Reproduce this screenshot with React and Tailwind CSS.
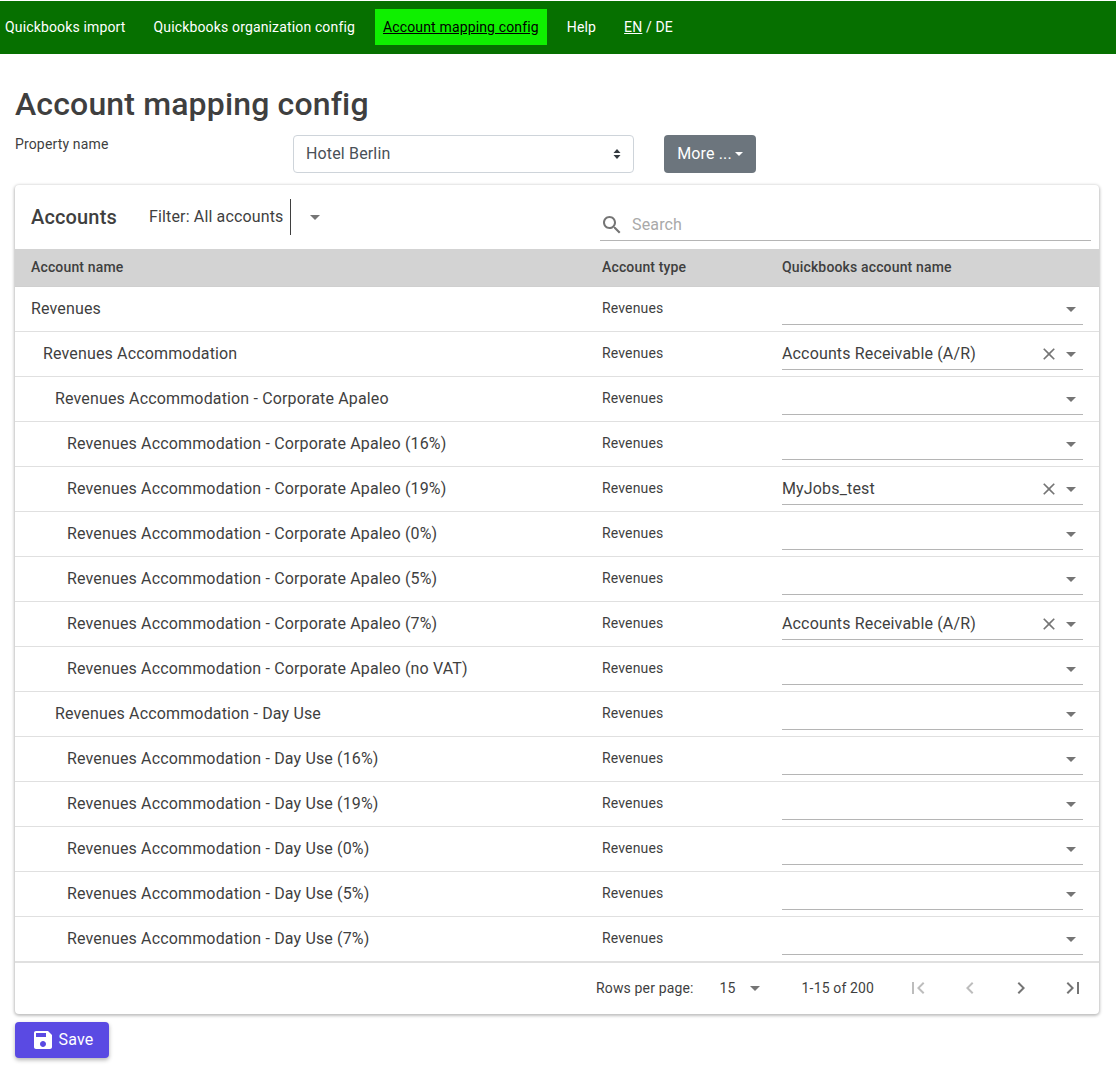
import React from 'react'

const rows = [
  { name: 'Revenues', indent: 0 },
  { name: 'Revenues Accommodation', indent: 1, value: 'Accounts Receivable (A/R)' },
  { name: 'Revenues Accommodation - Corporate Apaleo', indent: 2 },
  { name: 'Revenues Accommodation - Corporate Apaleo (16%)', indent: 3 },
  { name: 'Revenues Accommodation - Corporate Apaleo (19%)', indent: 3, value: 'MyJobs_test' },
  { name: 'Revenues Accommodation - Corporate Apaleo (0%)', indent: 3 },
  { name: 'Revenues Accommodation - Corporate Apaleo (5%)', indent: 3 },
  { name: 'Revenues Accommodation - Corporate Apaleo (7%)', indent: 3, value: 'Accounts Receivable (A/R)' },
  { name: 'Revenues Accommodation - Corporate Apaleo (no VAT)', indent: 3 },
  { name: 'Revenues Accommodation - Day Use', indent: 2 },
  { name: 'Revenues Accommodation - Day Use (16%)', indent: 3 },
  { name: 'Revenues Accommodation - Day Use (19%)', indent: 3 },
  { name: 'Revenues Accommodation - Day Use (0%)', indent: 3 },
  { name: 'Revenues Accommodation - Day Use (5%)', indent: 3 },
  { name: 'Revenues Accommodation - Day Use (7%)', indent: 3 },
]

const indents = ['pl-4', 'pl-7', 'pl-10', 'pl-[52px]']

function Icon({ d, className }) {
  return (
    <svg viewBox="0 0 24 24" fill="currentColor" className={className}>
      <path d={d} />
    </svg>
  )
}

const ICONS = {
  drop: 'M7 10l5 5 5-5z',
  clear: 'M19 6.41L17.59 5 12 10.59 6.41 5 5 6.41 10.59 12 5 17.59 6.41 19 12 13.41 17.59 19 19 17.59 13.41 12z',
  search: 'M15.5 14h-.79l-.28-.27C15.41 12.59 16 11.11 16 9.5 16 5.91 13.09 3 9.5 3S3 5.91 3 9.5 5.91 16 9.5 16c1.61 0 3.09-.59 4.23-1.57l.27.28v.79l5 4.99L20.49 19l-4.99-5zm-6 0C7.01 14 5 11.99 5 9.5S7.01 5 9.5 5 14 7.01 14 9.5 11.99 14 9.5 14z',
  first: 'M18.41 16.59L13.82 12l4.59-4.59L17 6l-6 6 6 6zM6 6h2v12H6z',
  last: 'M5.59 7.41L10.18 12l-4.59 4.59L7 18l6-6-6-6zM16 6h2v12h-2z',
  prev: 'M15.41 7.41L14 6l-6 6 6 6 1.41-1.41L10.83 12z',
  next: 'M10 6L8.59 7.41 13.17 12l-4.58 4.58L10 18l6-6z',
  save: 'M17 3H5c-1.11 0-2 .9-2 2v14c0 1.1.89 2 2 2h14c1.1 0 2-.9 2-2V7l-4-4zm-5 16c-1.66 0-3-1.34-3-3s1.34-3 3-3 3 1.34 3 3-1.34 3-3 3zm3-10H5V5h10v4z',
}

function Row({ row }) {
  return (
    <div className="grid grid-cols-[571px_180px_333px] h-[45px] items-center border-b border-[#e0e0e0]">
      <div className={`${indents[row.indent]} text-base`}>{row.name}</div>
      <div className="pl-4 pb-[2px] text-sm">Revenues</div>
      <div className="px-4">
        <div className="flex items-center h-[32px] border-b border-[#b5b5b5]">
          <span className="flex-1 text-base">{row.value}</span>
          {row.value && <Icon d={ICONS.clear} className="w-5 h-5 text-[#757575]" />}
          <Icon d={ICONS.drop} className="w-6 h-6 text-[#757575]" />
        </div>
      </div>
    </div>
  )
}

export default function App() {
  return (
    <div className="min-h-[1065px] bg-white text-[#3f3f3f] tracking-[0.15px] font-['Roboto',sans-serif]">
      {/* Top nav */}
      <div className="mt-[1px] h-[53px] pb-[1px] bg-[#067000] flex items-center text-sm text-white">
        <a className="pl-[5px] pr-[14px] py-2">Quickbooks import</a>
        <a className="px-[14px] py-2">Quickbooks organization config</a>
        <a className="ml-[6px] px-2 h-[36px] leading-[36px] bg-[#0ff000] text-black underline">Account mapping config</a>
        <a className="ml-[6px] px-[14px] py-2">Help</a>
        <span className="ml-[14px]"><span className="underline">EN</span> / DE</span>
      </div>

      <div className="px-[15px]">
        <h2 className="mt-[31px] text-[32px] leading-[38px] font-medium">Account mapping config</h2>

        <div className="mt-[12px] flex items-start h-[38px]">
          <div className="w-[278px] text-sm leading-[18px]">Property name</div>
          <div className="w-[341px] h-[38px] flex items-center justify-between px-3 border border-[#ced4da] rounded bg-white text-base text-[#495057]">
            <span>Hotel Berlin</span>
            <svg width="8" height="12" viewBox="0 0 8 12" fill="#343a40">
              <path d="M4 1L7.5 5H0.5zM4 11L0.5 7H7.5z" />
            </svg>
          </div>
          <button className="ml-[30px] w-[92px] h-[38px] flex items-center justify-center gap-[3px] rounded bg-[#6c757d] text-base text-white">
            More ...
            <span className="border-x-[4px] border-t-[4px] border-x-transparent border-t-white"></span>
          </button>
        </div>

        {/* Card */}
        <div className="mt-[12px] w-[1084px] rounded bg-white shadow-[0_1px_3px_1px_rgba(0,0,0,0.25)]">
          <div className="h-[64px] flex">
            <div className="pl-4 pt-[19px] w-[134px] text-xl leading-[26px] font-medium">Accounts</div>
            <div className="pt-[14px] flex items-start">
              <span className="text-base leading-[36px] h-[36px]">Filter: All accounts</span>
              <span className="ml-[6px] w-[1px] h-[36px] bg-[#3f3f3f]"></span>
              <Icon d={ICONS.drop} className="ml-[12px] mt-[6px] w-6 h-6 text-[#757575]" />
            </div>
            <div className="ml-auto mr-2 mt-[24px] w-[491px] h-[32px] flex items-center gap-2 border-b border-[#b5b5b5]">
              <Icon d={ICONS.search} className="w-6 h-6 text-[#757575]" />
              <span className="text-base text-[#a9a9a9]">Search</span>
            </div>
          </div>

          <div className="grid grid-cols-[571px_180px_333px] h-[38px] pb-[2px] items-center bg-[#d3d3d3] border-b border-[#cfcfcf] text-sm font-medium">
            <div className="pl-4">Account name</div>
            <div className="pl-4">Account type</div>
            <div className="pl-4">Quickbooks account name</div>
          </div>

          {rows.map((row) => (
            <Row key={row.name} row={row} />
          ))}

          <div className="-mt-[1px] h-[53px] pb-[2px] border-t-2 border-[#e0e0e0] flex items-center text-sm">
            <span className="ml-[581px]">Rows per page:</span>
            <span className="ml-[26px] w-[22px]">15</span>
            <Icon d={ICONS.drop} className="ml-[1px] w-6 h-6 text-[#757575]" />
            <span className="ml-[35px]">1-15 of 200</span>
            <div className="ml-[32px] flex text-[#757575]">
              <Icon d={ICONS.first} className="w-6 h-6 mr-[27.5px] text-[#bdbdbd]" />
              <Icon d={ICONS.prev} className="w-6 h-6 mr-[27.5px] text-[#bdbdbd]" />
              <Icon d={ICONS.next} className="w-6 h-6 mr-[27.5px]" />
              <Icon d={ICONS.last} className="w-6 h-6" />
            </div>
          </div>
        </div>

        <button className="mt-2 w-[94px] h-[36px] flex items-center justify-center gap-[4px] rounded bg-[#5a4ae3] text-base text-white shadow-[0_2px_4px_rgba(0,0,0,0.3)]">
          <Icon d={ICONS.save} className="w-6 h-6" />
          Save
        </button>
      </div>
    </div>
  )
}
